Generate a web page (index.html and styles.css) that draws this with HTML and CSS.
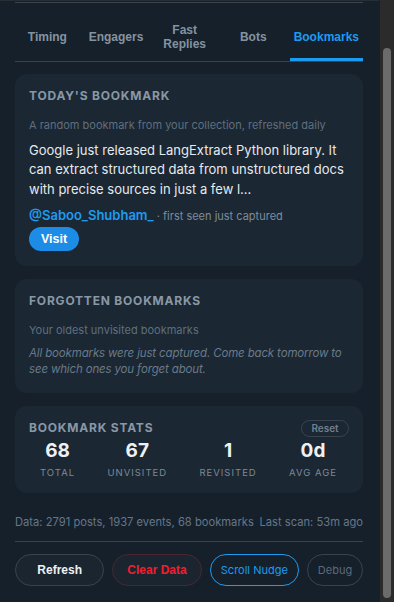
FILE: index.html
```html
<!DOCTYPE html>
<html lang="en">
<head>
    <meta charset="UTF-8">
    <meta name="viewport" content="width=device-width, initial-scale=1.0">
    <title>Bookmarks</title>
    <link rel="stylesheet" href="styles.css">
</head>
<body>
    <div class="panel">
        <div class="top_rule"></div>
        <nav class="tabs">
            <button class="tab">Timing</button>
            <button class="tab">Engagers</button>
            <button class="tab">Fast Replies</button>
            <button class="tab">Bots</button>
            <button class="tab active">Bookmarks</button>
        </nav>

        <section class="card">
            <h2 class="card_title">Today's Bookmark</h2>
            <p class="card_sub">A random bookmark from your collection, refreshed daily</p>
            <p class="bm_text">Google just released LangExtract Python library. It can extract structured data from unstructured docs with precise sources in just a few l...</p>
            <div class="bm_meta"><span class="handle">@Saboo_Shubham_</span> · first seen just captured</div>
            <button class="visit">Visit</button>
        </section>

        <section class="card">
            <h2 class="card_title">Forgotten Bookmarks</h2>
            <p class="card_sub">Your oldest unvisited bookmarks</p>
            <p class="empty">All bookmarks were just captured. Come back tomorrow to see which ones you forget about.</p>
        </section>

        <section class="card stats_card">
            <div class="stats_head">
                <h2 class="card_title">Bookmark Stats</h2>
                <button class="reset">Reset</button>
            </div>
            <div class="stats">
                <div class="stat"><span class="num">68</span><span class="lbl">Total</span></div>
                <div class="stat"><span class="num">67</span><span class="lbl">Unvisited</span></div>
                <div class="stat"><span class="num">1</span><span class="lbl">Revisited</span></div>
                <div class="stat"><span class="num">0d</span><span class="lbl">Avg Age</span></div>
            </div>
        </section>

        <div class="data_line">
            <span>Data: 2791 posts, 1937 events, 68 bookmarks</span>
            <span>Last scan: 53m ago</span>
        </div>

        <div class="actions">
            <button class="btn refresh">Refresh</button>
            <button class="btn clear">Clear Data</button>
            <button class="btn nudge">Scroll Nudge</button>
            <button class="btn debug">Debug</button>
        </div>
    </div>
    <div class="scrollbar"><div class="thumb"></div></div>
</body>
</html>
```

FILE: styles.css
```css
body {
    margin: 0;
    height: 602px;
    overflow: hidden;
    display: flex;
    background-color: #15202b;
    color: #e1e6ea;
    font-family: Inter, "Noto Sans", sans-serif;
}
button {
    cursor: pointer;
}
.panel {
    flex: 1;
    padding: 0 16px 0 15px;
    border-top: 1px solid #262d34;
}
.top_rule {
    height: 1px;
    margin-top: 1px;
    background-color: #3a444d;
}
.tabs {
    display: flex;
    gap: 4px;
    margin-top: 13px;
    border-bottom: 1px solid #38444d;
}
.tab {
    flex: 1;
    padding: 7px 4px;
    border: none;
    border-bottom: 3px solid transparent;
    background: none;
    color: #8493a1;
    font-family: "Liberation Sans", Arial, sans-serif;
    font-weight: bold;
    font-size: 12px;
    line-height: 14px;
}
.tab.active {
    color: #1d9bf0;
    border-bottom-color: #1d9bf0;
}
.card {
    margin-top: 12px;
    padding: 14px 14px 15px;
    border-radius: 12px;
    background-color: #1b2733;
}
.card + .card {
    margin-top: 13px;
}
.card_title {
    margin: 0;
    font-size: 12px;
    line-height: 16px;
    font-weight: 700;
    letter-spacing: 0.8px;
    text-transform: uppercase;
    color: #8898a6;
}
.card_sub {
    margin: 13.5px 0 0;
    font-size: 11px;
    line-height: 14px;
    color: #5f6f7e;
}
.bm_text {
    margin: 9px 0 0;
    font-size: 13px;
    line-height: 19.5px;
    color: #e6eaed;
}
.bm_meta {
    margin-top: 7.5px;
    font-size: 11px;
    line-height: 16px;
    color: #7d8c99;
}
.handle {
    color: #1d9bf0;
    font-weight: 600;
    font-size: 13px;
}
.visit {
    display: block;
    margin-top: 3.5px;
    height: 24px;
    width: 50px;
    border: none;
    border-radius: 12px;
    background-color: #1d8ce6;
    color: #fff;
    font-family: "Liberation Sans", Arial, sans-serif;
    font-weight: bold;
    font-size: 12.5px;
}
.empty {
    margin: 8px 0 0;
    font-size: 11.5px;
    line-height: 16.7px;
    letter-spacing: -0.15px;
    font-style: italic;
    color: #6a7a89;
}
.stats_card {
    padding-top: 14px;
    padding-bottom: 13px;
}
.stats_head {
    display: flex;
    justify-content: space-between;
    align-items: center;
}
.reset {
    height: 17px;
    width: 48px;
    padding: 0;
    border: 1px solid #38444d;
    border-radius: 9px;
    background: none;
    color: #6f7f8d;
    font-family: Inter, sans-serif;
    font-weight: 600;
    font-size: 10px;
}
.stats {
    display: flex;
    justify-content: space-between;
    margin-top: 2px;
    padding: 0 12px 0 11px;
}
.stat {
    display: flex;
    flex-direction: column;
    align-items: center;
}
.num {
    font-size: 19px;
    line-height: 24px;
    font-weight: 700;
    color: #eef1f3;
}
.lbl {
    margin-top: 3px;
    font-size: 9.5px;
    line-height: 14px;
    letter-spacing: 1px;
    text-transform: uppercase;
    color: #7b8a97;
}
.data_line {
    display: flex;
    justify-content: space-between;
    margin-top: 22px;
    font-size: 11.2px;
    line-height: 14px;
    color: #66778a;
}
.actions {
    display: flex;
    gap: 8px;
    margin-top: 12px;
    padding-top: 12px;
    border-top: 1px solid #38444d;
}
.btn {
    flex: 1;
    height: 32px;
    border-radius: 16px;
    border: 1px solid #38444d;
    background-color: #1b2530;
    font-size: 12px;
}
.refresh {
    color: #eef1f3;
    font-family: "Liberation Sans", Arial, sans-serif;
    font-weight: bold;
}
.clear {
    border-color: #4a2630;
    color: #f01f30;
    font-family: "Liberation Sans", Arial, sans-serif;
    font-weight: bold;
}
.nudge {
    border-color: #1d9bf0;
    background: none;
    color: #1d9bf0;
    font-family: Inter, sans-serif;
    font-size: 11px;
}
.debug {
    flex: 0 0 56px;
    background: none;
    color: #5c6b79;
    font-family: Inter, sans-serif;
    font-size: 11px;
}
.scrollbar {
    width: 14px;
    border-left: 1px solid #1e1e1e;
    background-color: #2b2b2b;
    position: relative;
}
.thumb {
    position: absolute;
    left: 3px;
    top: 48px;
    width: 8px;
    height: 550px;
    border-radius: 4px;
    background-color: #6b6b6b;
}
```
